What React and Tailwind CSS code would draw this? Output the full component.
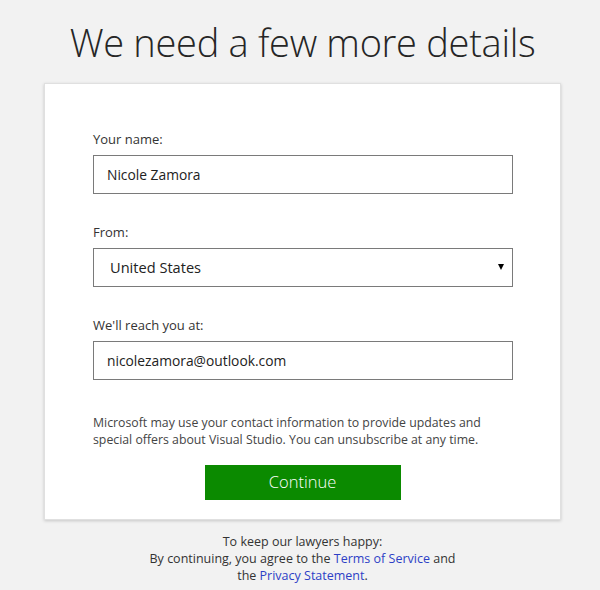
const Field = ({ label, children }) => (
  <div>
    <label className="block text-[13px] leading-[17px] text-[#333]">{label}</label>
    <div className="mt-[7px]">{children}</div>
  </div>
);

const App = () => {
  return (
    <div
      className="min-h-[590px] bg-[#f2f2f2] flex flex-col items-center pl-[5px]"
      style={{ fontFamily: '"Open Sans", "Noto Sans", sans-serif' }}
    >
      <h1 className="mt-[16px] text-[38px] leading-[52px] font-light text-[#262626] tracking-[-0.3px]">
        We need a few more details
      </h1>

      <div className="mt-[15px] w-[517px] h-[437px] bg-white border border-[#e0e0e0] shadow-[0_1px_3px_rgba(0,0,0,0.18)] px-[48px] pt-[47px]">
        <form className="flex flex-col gap-[30px]">
          <Field label="Your name:">
            <input
              type="text"
              defaultValue="Nicole Zamora"
              className="w-[420px] h-[39px] border border-[#7a7a7a] px-[13px] text-[13.8px] text-[#222] outline-none"
            />
          </Field>
          <Field label="From:">
            <div className="relative w-[420px] h-[39px] border border-[#7a7a7a] flex items-center px-[16px] text-[14.6px] text-[#222]">
              United States
              <span className="absolute right-[8px] top-[15px] w-0 h-0 border-l-[3px] border-r-[3px] border-t-[6px] border-l-transparent border-r-transparent border-t-black"></span>
            </div>
          </Field>
          <Field label="We'll reach you at:">
            <input
              type="text"
              defaultValue="nicolezamora@outlook.com"
              className="w-[420px] h-[39px] border border-[#7a7a7a] px-[13px] text-[13.8px] text-[#222] outline-none"
            />
          </Field>
        </form>

        <p className="mt-[34px] text-[12.3px] leading-[17px] text-[#444]">
          Microsoft may use your contact information to provide updates and special offers about Visual Studio. You can unsubscribe at any time.
        </p>

        <div className="mt-[17px] flex justify-center">
          <button
            type="button"
            className="w-[196px] h-[35px] bg-[#0b8a00] text-white text-[16.5px] font-light"
          >
            Continue
          </button>
        </div>
      </div>

      <div className="mt-[13px] text-center text-[12.5px] leading-[17px] text-[#333]">
        <p>To keep our lawyers happy:</p>
        <p>
          By continuing, you agree to the <a className="text-[#2d3fc6]">Terms of Service</a> and
        </p>
        <p>
          the <a className="text-[#2d3fc6]">Privacy Statement</a>.
        </p>
      </div>
    </div>
  );
};

export default App;
